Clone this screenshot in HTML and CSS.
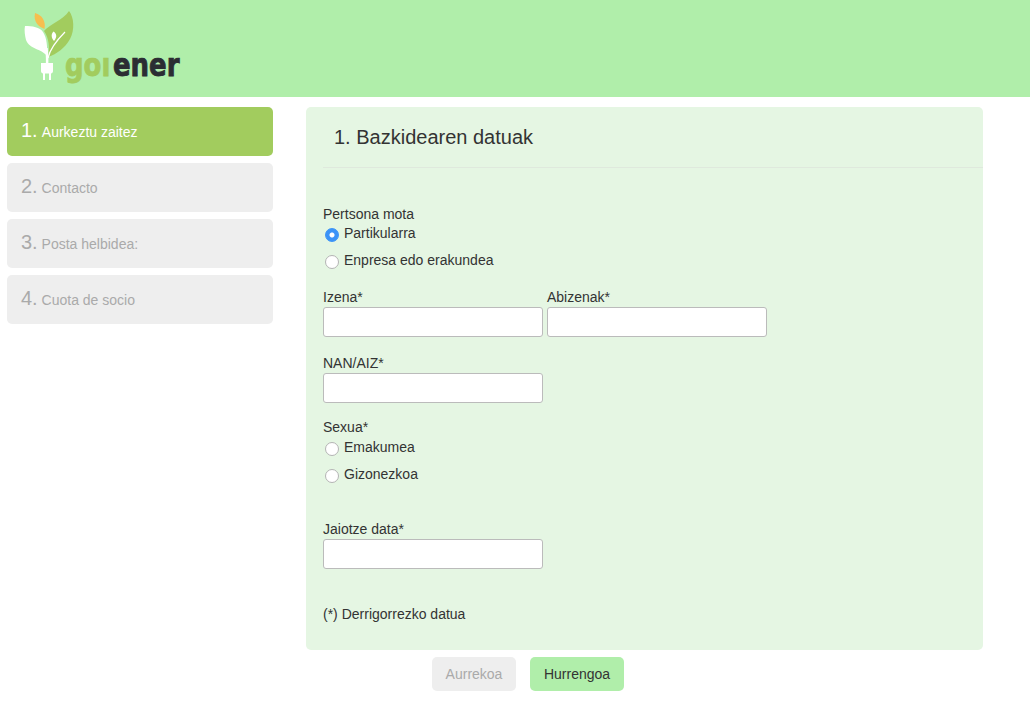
FILE: index.html
```html
<!DOCTYPE html>
<html lang="eu">
<head>
<meta charset="utf-8">
<title>Goiener</title>
<link rel="stylesheet" href="styles.css">
</head>
<body>
<header class="topbar">
  <svg class="logo" width="200" height="97" viewBox="0 0 200 97" aria-label="goiener">
    <defs>
      <clipPath id="logo-clip"><rect x="60" y="57.500" width="130" height="30"/></clipPath>
    </defs>
    <path fill="#f6bf4f" d="M35 13C42 15 46 21 44.500 29C39 27 33 22 35 13Z"/>
    <path fill="#a2cc5e" d="M69 11C74 17 75 30 70 39C65 48 57 54 48 57C50 48 49 38 44 31C50 24 63 20 69 11Z"/>
    <path fill="#fff" d="M25 26C32 26 40 27 43 32C47 38 47.500 47 47 56C41 48 30 50 26 40C25 36 24 30 25 26Z"/>
    <path fill="none" stroke="#fff" stroke-width="2.500" d="M46.500 48C47 54 47.500 59 47 65"/>
    <path fill="none" stroke="#fff" stroke-width="1.200" d="M48 58C50 49 56 41 65 32"/>
    <path fill="#fff" d="M53.500 31.500C56.500 33.500 57.500 37 54 41C51 38 51 34 53.500 31.500Z"/>
    <path fill="#fff" d="M41 63H53V71C53 72.500 52 73.500 51 73.500V80H49V73.500H45V80H43V73.500C42 73.500 41 72.500 41 71Z"/>
    <g clip-path="url(#logo-clip)">
      <text class="logo-text logo-goi" transform="translate(65 76) scale(1 1.240)" font-size="26">goi</text>
      <text class="logo-text logo-ener" transform="translate(113 76) scale(1 1.240)" font-size="26">ener</text>
    </g>
  </svg>
</header>
<main class="layout">
  <nav class="steps">
    <div class="step step-active"><span class="step-num">1.</span> Aurkeztu zaitez</div>
    <div class="step"><span class="step-num">2.</span> Contacto</div>
    <div class="step"><span class="step-num">3.</span> Posta helbidea:</div>
    <div class="step"><span class="step-num">4.</span> Cuota de socio</div>
  </nav>
  <div class="content">
    <section class="panel">
      <h1 class="panel-title">1. Bazkidearen datuak</h1>
      <form class="form">
        <div class="field">
          <div class="label">Pertsona mota</div>
          <label class="radio radio-tight"><input type="radio" name="mota" checked>Partikularra</label>
          <label class="radio"><input type="radio" name="mota">Enpresa edo erakundea</label>
        </div>
        <div class="field field-row">
          <label class="col"><span class="label">Izena*</span><input class="text" type="text"></label>
          <label class="col"><span class="label">Abizenak*</span><input class="text" type="text"></label>
        </div>
        <div class="field field-nan">
          <label class="col"><span class="label">NAN/AIZ*</span><input class="text" type="text"></label>
        </div>
        <div class="field field-wide">
          <div class="label">Sexua*</div>
          <label class="radio radio-flush"><input type="radio" name="sexua">Emakumea</label>
          <label class="radio"><input type="radio" name="sexua">Gizonezkoa</label>
        </div>
        <div class="field field-wide">
          <label class="col"><span class="label">Jaiotze data*</span><input class="text" type="text"></label>
        </div>
        <p class="note">(*) Derrigorrezko datua</p>
      </form>
    </section>
    <div class="actions">
      <button class="btn btn-off" type="button">Aurrekoa</button>
      <button class="btn btn-next" type="button">Hurrengoa</button>
    </div>
  </div>
</main>
</body>
</html>
```

FILE: styles.css
```css
* { box-sizing: border-box; }
html, body { margin: 0; padding: 0; }
body {
  background: #fff;
  color: #333;
  font-family: "Liberation Sans", Arial, sans-serif;
  font-size: 14px;
  line-height: 20px;
}
.topbar { height: 97px; background: #b0eeaa; }
.logo { display: block; }
.logo-text {
  font-family: "DejaVu Sans", sans-serif;
  font-weight: 700;
  stroke-width: 0.7px;
}
.logo-goi { fill: #a2cc5e; stroke: #a2cc5e; }
.logo-ener { fill: #2b2d33; stroke: #2b2d33; }
.layout {
  display: grid;
  grid-template-columns: 266px 677px;
  column-gap: 33px;
  padding: 10px 0 0 7px;
}
.steps { display: flex; flex-direction: column; gap: 7px; }
.step {
  height: 49px;
  padding: 0 14px;
  border-radius: 5px;
  background: #eee;
  color: #aaa;
  line-height: 47px;
  white-space: nowrap;
}
.step-active { background: #a2cc5e; color: #fff; }
.step-active .step-num { margin-right: 1px; }
.step-num { font-size: 20px; }
.panel {
  height: 543px;
  padding: 0 0 0 17px;
  background: #e5f6e3;
  border-radius: 5px;
}
.panel-title {
  margin: 0;
  height: 61px;
  padding: 0 0 0 11px;
  border-bottom: 1px solid #dfe9dd;
  font-size: 20px;
  font-weight: 400;
  line-height: 60px;
}
.form { padding-top: 36px; }
.field { margin-bottom: 17px; }
.field-row { display: flex; gap: 4px; margin-bottom: 16px; }
.field-nan { margin-bottom: 14px; }
.field-wide { margin-bottom: 35px; }
.label { display: block; }
.col { display: block; width: 220px; }
.text {
  display: block;
  width: 220px;
  height: 30px;
  padding: 0 8px;
  background: #fff;
  border: 1px solid #bbb;
  border-radius: 3px;
  font: inherit;
}
.radio {
  display: flex;
  align-items: center;
  height: 20px;
  margin-top: 7px;
}
.radio-tight { margin-top: -1px; }
.radio-flush { margin-top: 0; }
.radio input {
  appearance: none;
  flex: none;
  width: 14px;
  height: 14px;
  margin: 4px 5px 0 2px;
  background: #fff;
  border: 1px solid #b4b4b4;
  border-radius: 50%;
}
.radio input:checked {
  background: radial-gradient(circle, #fff 0 2px, #3b93f7 3px);
  border-color: #3b93f7;
}
.note { margin: 0; }
.actions {
  display: flex;
  gap: 14px;
  padding: 7px 0 0 126px;
}
.btn {
  height: 34px;
  padding: 0;
  border: 0;
  border-radius: 5px;
  font: inherit;
}
.btn-off { width: 84px; background: #eee; color: #aaa; }
.btn-next { width: 94px; background: #b0eeaa; color: #333; }
```
